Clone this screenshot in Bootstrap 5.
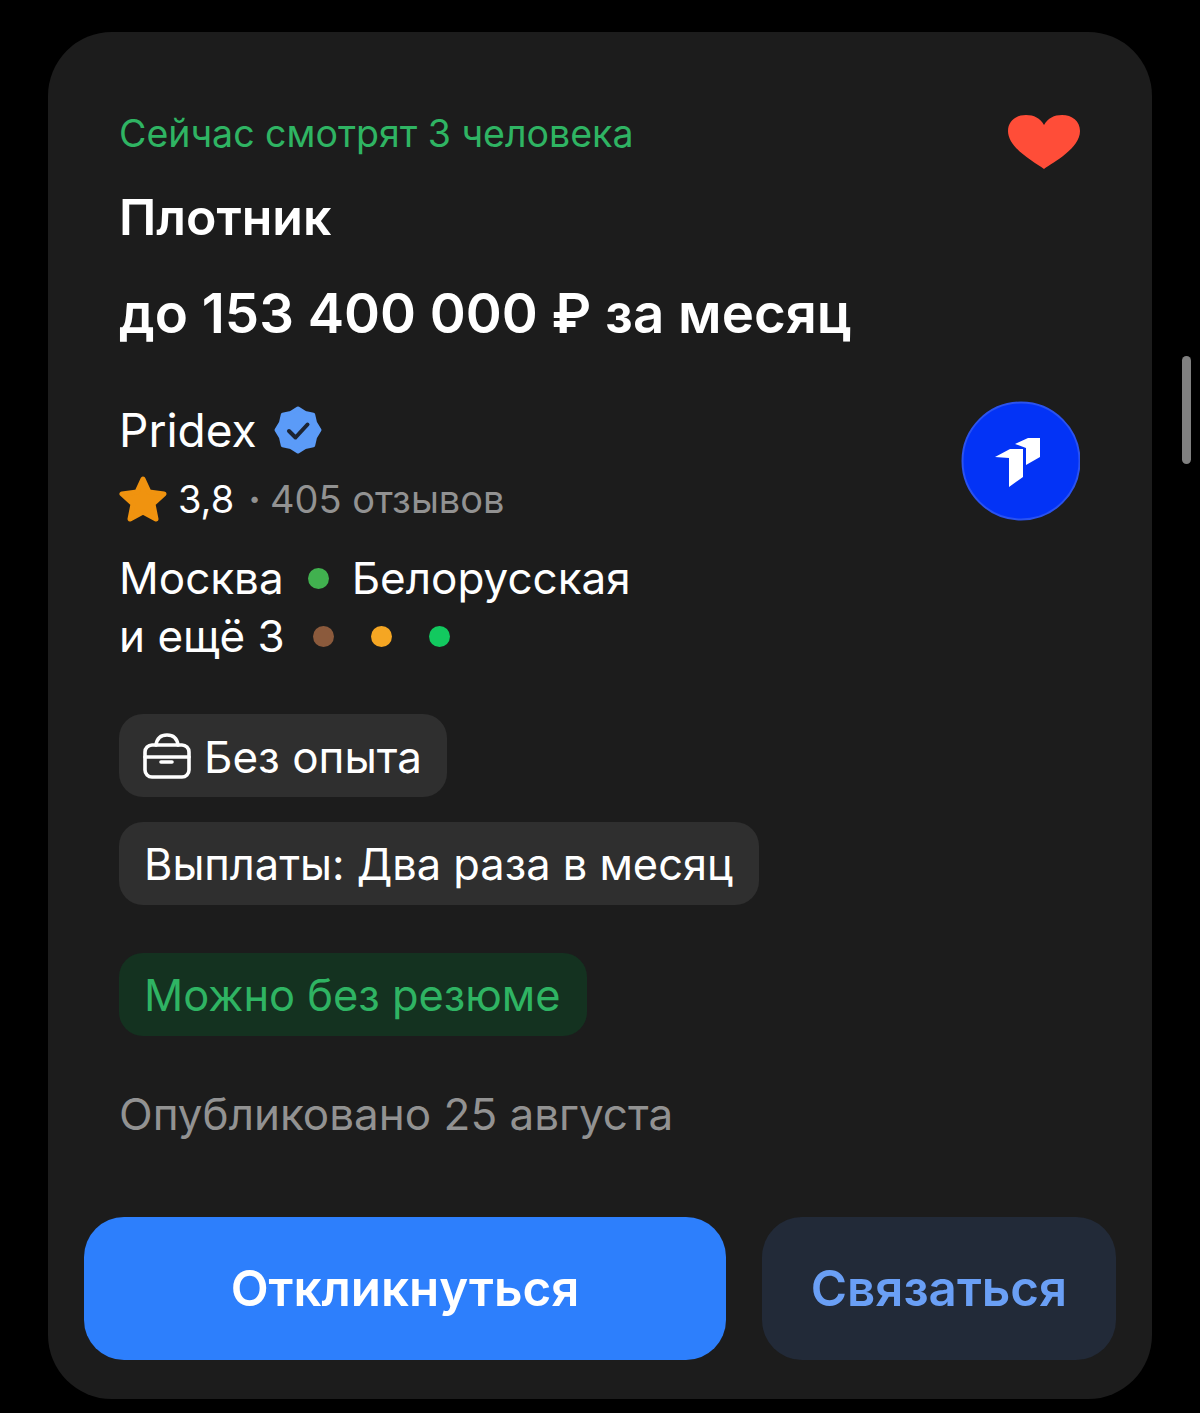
<!DOCTYPE html>
<html lang="ru">
<head>
    <meta charset="UTF-8">
    <meta name="viewport" content="width=device-width, initial-scale=1.0">
    <title>Вакансия</title>
    <link href="https://cdn.jsdelivr.net/npm/bootstrap@5.3.3/dist/css/bootstrap.min.css" rel="stylesheet">
    <style>
        html, body { height: 100%; }
        body { background: #000; font-family: Inter, "Noto Sans", sans-serif; color: #fff; overflow: hidden; }
        .page-wrap { padding: 32px 48px 14px; }
        .job-card { background: #1c1c1c; border-radius: 64px; height: 1367px; padding: 78px 36px 39px; }
        .job-body { padding: 0 36px 0 35px; }
        .watching { color: #2fb463; font-size: 37.5px; line-height: 48px; }
        .job-title { font-size: 50px; font-weight: 600; line-height: 60px; margin-top: 17px; margin-bottom: 0; }
        .salary { font-size: 54.6px; font-weight: 600; line-height: 68px; margin-top: 32px; }
        .company { font-size: 46px; line-height: 56px; margin-top: 55px; gap: 16px; }
        .rating { font-size: 38px; line-height: 48px; margin-top: 17px; }
        .rating svg { margin-left: -1px; }
        .rate-num { margin-left: 10px; }
        .rate-sep { margin-left: 14px; font-weight: 700; }
        .rate-count { margin-left: 9px; }
        .rating-muted { color: #929292; }
        .logo-mark { margin-top: 54px; }
        .metro { font-size: 44px; line-height: 58px; }
        .metro-first { margin-top: 26px; }
        .dot { width: 21px; height: 21px; border-radius: 50%; display: inline-block; flex-shrink: 0; }
        .dot-gap { margin-left: 23px; }
        .dot-row { margin-left: 28px; gap: 37px; }
        .chip-stack { margin-top: 49px; }
        .chip { display: inline-flex; align-items: center; height: 83px; padding: 2px 26px 0 25px; border-radius: 24px; background: #2f2f2f; font-size: 43.4px; }
        .chip-first { font-size: 44px; padding-right: 25px; }
        .chip-icon { margin-left: -1px; margin-right: 13px; margin-top: -2px; }
        .chip-pay { margin-top: 25px; }
        .chip-green { background: #143220; color: #2fb463; }
        .published { color: #929292; font-size: 44px; line-height: 50px; margin-top: 53px; }
        .job-actions { margin-top: 78px; gap: 36px; }
        .btn-apply, .btn-contact { height: 143px; border: 0; border-radius: 40px; font-size: 49.3px; font-weight: 600; }
        .btn-apply { width: 642px; background: #2d7ffc; color: #fff; }
        .btn-contact { width: 354px; background: #222a38; color: #6a9ff5; }
        .scroll-thumb { position: absolute; left: 1182px; top: 356px; width: 9px; height: 108px; border-radius: 5px; background: #808080; }
    </style>
</head>
<body>
    <div class="page-wrap">
        <div class="job-card d-flex flex-column">
            <div class="job-body">
                <div class="d-flex justify-content-between align-items-start">
                    <div class="watching">Сейчас смотрят 3 человека</div>
                    <svg width="74" height="56" viewBox="-1 0 74 56" class="mt-1"><path fill="#ff4d38" d="M37 55C27 48 1 34 1 17 1 7 9 1 19 1c8 0 14 3 18 10C41 4 47 1 55 1c10 0 18 6 18 16 0 17-26 31-36 38z"/></svg>
                </div>
                <h1 class="job-title">Плотник</h1>
                <div class="salary">до 153 400 000 ₽ за месяц</div>
                <div class="d-flex justify-content-between align-items-start">
                    <div>
                        <div class="company d-flex align-items-center">
                            Pridex
                            <svg width="50" height="50" viewBox="0 0 50 50"><path fill="#5b9bf8" stroke="#5b9bf8" stroke-width="4" stroke-linejoin="round" d="M25 3.5l7.1 4.4 8.100 1.900 1.900 8.100 4.400 7.100-4.400 7.100-1.900 8.100-8.100 1.900-7.100 4.400-7.100-4.400-8.100-1.900-1.900-8.100-4.400-7.100 4.400-7.100 1.900-8.100 8.100-1.900z"/><path fill="none" stroke="#1c2433" stroke-width="4" stroke-linecap="round" stroke-linejoin="round" d="M16 26l6.500 6.500 12-13"/></svg>
                        </div>
                        <div class="rating d-flex align-items-center">
                            <svg width="50" height="48" viewBox="0 0 50 48"><path fill="#f0930f" stroke="#f0930f" stroke-width="5" stroke-linejoin="round" d="M25 4l6 13 15 2-11 10 3 15-13-7-13 7 3-15L4 19l15-2z"/></svg>
                            <span class="rate-num">3,8</span><span class="rating-muted rate-sep">·</span><span class="rating-muted rate-count">405 отзывов</span>
                        </div>
                    </div>
                    <svg width="120" height="120" viewBox="0 0 120 120" class="logo-mark"><circle cx="61" cy="60" r="58.500" fill="#0333f6" stroke="#2a52f0" stroke-width="2"/><path fill="#fff" d="M35 56l15-8h13v28l-14 10V57zM55 43l13-6h12v19l-14 8V47z"/></svg>
                </div>
                <div class="metro metro-first d-flex align-items-center">Москва<span class="dot ms-4" style="background:#41b14f"></span><span class="dot-gap">Белорусская</span></div>
                <div class="metro d-flex align-items-center">и ещё 3<span class="dot-row d-flex"><span class="dot" style="background:#8b5a3c"></span><span class="dot" style="background:#f5a623"></span><span class="dot" style="background:#12c95f"></span></span></div>
                <div class="chip-stack d-flex flex-column align-items-start">
                    <div class="chip chip-first">
                        <svg class="chip-icon" width="48" height="46" viewBox="0 0 48 46" fill="none" stroke="#fff" stroke-width="3.600" stroke-linecap="round" stroke-linejoin="round"><rect x="2" y="12" width="44" height="32" rx="7"/><path d="M2 24h44M13 12C14 5 18 2 24 2S34 5 35 12M18 29h11"/></svg>
                        Без опыта
                    </div>
                    <div class="chip chip-pay">Выплаты: Два раза в месяц</div>
                    <div class="chip chip-green mt-5">Можно без резюме</div>
                </div>
                <div class="published">Опубликовано 25 августа</div>
            </div>
            <div class="job-actions d-flex">
                <button type="button" class="btn btn-apply">Откликнуться</button>
                <button type="button" class="btn btn-contact">Связаться</button>
            </div>
        </div>
    </div>
    <div class="scroll-thumb"></div>
    <script src="https://cdn.jsdelivr.net/npm/bootstrap@5.3.3/dist/js/bootstrap.bundle.min.js"></script>
</body>
</html>
